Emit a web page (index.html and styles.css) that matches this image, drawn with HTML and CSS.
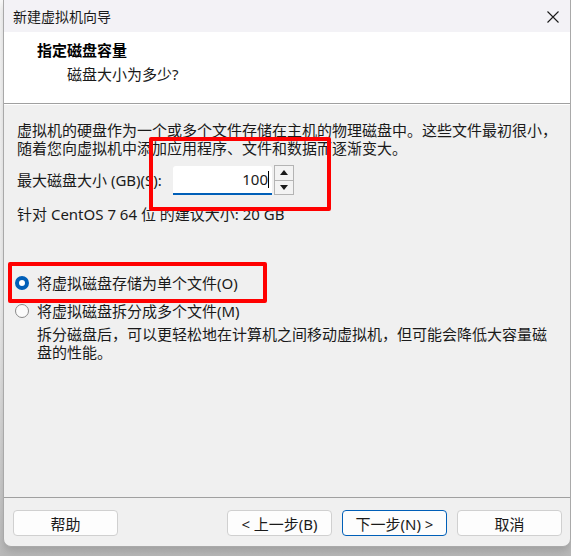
FILE: index.html
```html
<!DOCTYPE html>
<html lang="zh-CN">
<head>
    <meta charset="UTF-8">
    <title>新建虚拟机向导</title>
    <link rel="stylesheet" href="styles.css">
</head>
<body>
<div class="wizard">
    <div class="wizard__titlebar">
        <span class="wizard__title">新建虚拟机向导</span>
        <span class="wizard__close">
            <svg width="12" height="12" viewBox="0 0 12 12"><path d="M0.5 0.5 L11.5 11.5 M11.5 0.5 L0.5 11.5" stroke="#1a1a1a" stroke-width="1.1" fill="none"/></svg>
        </span>
    </div>
    <div class="wizard__header">
        <div class="wizard__heading">指定磁盘容量</div>
        <div class="wizard__subheading">磁盘大小为多少?</div>
    </div>
    <div class="wizard__body">
        <p class="text">虚拟机的硬盘作为一个或多个文件存储在主机的物理磁盘中。这些文件最初很小，<br>随着您向虚拟机中添加应用程序、文件和数据而逐渐变大。</p>
        <div class="size-row">
            <label class="size-row__label">最大磁盘大小 (GB)(S):</label>
            <div class="spin-input">
                <span class="spin-input__value">100</span><span class="spin-input__caret"></span>
            </div>
            <div class="spin">
                <span class="spin__btn"><span class="arrow arrow--up"></span></span>
                <span class="spin__btn"><span class="arrow arrow--down"></span></span>
            </div>
        </div>
        <p class="text text--hint">针对 CentOS 7 64 位 的建议大小: 20 GB</p>

        <div class="radio-row radio-row--first">
            <span class="radio is-checked"></span>
            <span>将虚拟磁盘存储为单个文件(O)</span>
        </div>
        <div class="radio-row">
            <span class="radio"></span>
            <span>将虚拟磁盘拆分成多个文件(M)</span>
        </div>
        <p class="text text--desc">拆分磁盘后，可以更轻松地在计算机之间移动虚拟机，但可能会降低大容量磁<br>盘的性能。</p>
    </div>
    <div class="wizard__footer">
        <button class="btn">帮助</button>
        <div class="wizard__nav">
            <button class="btn">&lt; 上一步(B)</button>
            <button class="btn btn--default">下一步(N) &gt;</button>
            <button class="btn">取消</button>
        </div>
    </div>

    <!-- 截图上的红色标注框 -->
    <div class="mark mark--size"></div>
    <div class="mark mark--radio"></div>
</div>
</body>
</html>
```

FILE: styles.css
```css
html, body {
    margin: 0;
    padding: 0;
}
body {
    width: 571px;
    height: 556px;
    overflow: hidden;
    background: linear-gradient(#fbfbfb 0, #f4f4f4 300px, #c2c2c2 540px, #b9b9b9 556px);
    font-family: "Noto Sans", "Noto Sans CJK SC", sans-serif;
    color: #1a1a1a;
}
.wizard {
    position: relative;
    display: flex;
    flex-direction: column;
    margin-left: 3px;
    width: 568px;
    height: 547px;
    box-sizing: border-box;
    border: 1px solid #a9a9a9;
    border-top: none;
    border-radius: 0 0 8px 8px;
    background: #f0f0f0;
    box-shadow: 0 4px 10px rgba(0, 0, 0, .18);
    overflow: hidden;
}
.wizard__titlebar {
    display: flex;
    align-items: center;
    justify-content: space-between;
    height: 32px;
    padding: 0 11px 0 9px;
    background: #f3f2f6;
    font-size: 14px;
}
.wizard__close {
    display: flex;
    margin-top: 1px;
}
.wizard__header {
    height: 71px;
    padding-left: 33px;
    background: #fff;
    border-bottom: 1px solid #a0a0a0;
    box-sizing: border-box;
    height: 72px;
}
.wizard__heading {
    padding-top: 9px;
    font-size: 15px;
    font-weight: bold;
    line-height: 18px;
    color: #000;
}
.wizard__subheading {
    margin-top: 6px;
    padding-left: 30px;
    font-size: 15px;
    line-height: 18px;
}
.wizard__body {
    flex: 1;
    padding: 16px 0 0 13px;
    font-size: 15px;
    border-top: 1px solid #fff;
}
.text {
    margin: 0;
    line-height: 18px;
    white-space: nowrap;
}
.text--hint {
    margin-top: 10px;
}
.text--desc {
    margin-left: 20px;
}
.size-row {
    display: flex;
    align-items: center;
    margin-top: 8px;
    height: 30px;
}
.size-row__label {
    width: 156px;
    line-height: 18px;
}
.spin-input {
    display: flex;
    align-items: center;
    justify-content: flex-end;
    width: 99px;
    height: 29px;
    box-sizing: border-box;
    padding-right: 3px;
    background: #fff;
    border-bottom: 2px solid #005fb8;
    border-radius: 3px 3px 0 0;
}
.spin-input__value {
    line-height: 18px;
}
.spin-input__caret {
    width: 1px;
    height: 17px;
    background: #000;
}
.spin {
    display: flex;
    flex-direction: column;
    margin-left: 2px;
    width: 20px;
    height: 30px;
    box-sizing: border-box;
    border: 1px solid #b4b4b4;
    background: #f3f3f3;
}
.spin__btn {
    flex: 1;
    display: flex;
    align-items: center;
    justify-content: center;
}
.spin__btn + .spin__btn {
    border-top: 1px solid #b4b4b4;
}
.arrow {
    width: 0;
    height: 0;
    border-left: 4px solid transparent;
    border-right: 4px solid transparent;
}
.arrow--up {
    border-bottom: 5px solid #1a1a1a;
}
.arrow--down {
    border-top: 5px solid #1a1a1a;
}
.radio-row {
    display: flex;
    align-items: center;
    gap: 8px;
    height: 28px;
    margin-left: -2px;
    line-height: 18px;
}
.radio-row--first {
    margin-top: 46px;
}
.radio {
    width: 14px;
    height: 14px;
    box-sizing: border-box;
    border-radius: 50%;
    border: 1px solid #8a8a8a;
    background: #fbfbfb;
}
.radio.is-checked {
    border: 4px solid #005fb8;
    background: #fff;
}
.wizard__footer {
    display: flex;
    justify-content: space-between;
    align-items: flex-start;
    height: 49px;
    box-sizing: border-box;
    padding: 12px 8px 0 9px;
    border-top: 1px solid #a0a0a0;
}
.wizard__nav {
    display: flex;
    gap: 10px;
}
.btn {
    width: 105px;
    height: 26px;
    padding: 0;
    border: 1px solid #d0d0d0;
    border-radius: 4px;
    background: #fdfdfd;
    font-family: inherit;
    font-size: 15px;
    color: #1a1a1a;
}
.btn--default {
    border-color: #005fb8;
}
.mark {
    position: absolute;
    border: 4px solid #f00;
    border-radius: 2px;
    box-sizing: border-box;
}
.mark--size {
    left: 145px;
    top: 137px;
    width: 182px;
    height: 74px;
}
.mark--radio {
    left: 4px;
    top: 262px;
    width: 259px;
    height: 41px;
}
```
